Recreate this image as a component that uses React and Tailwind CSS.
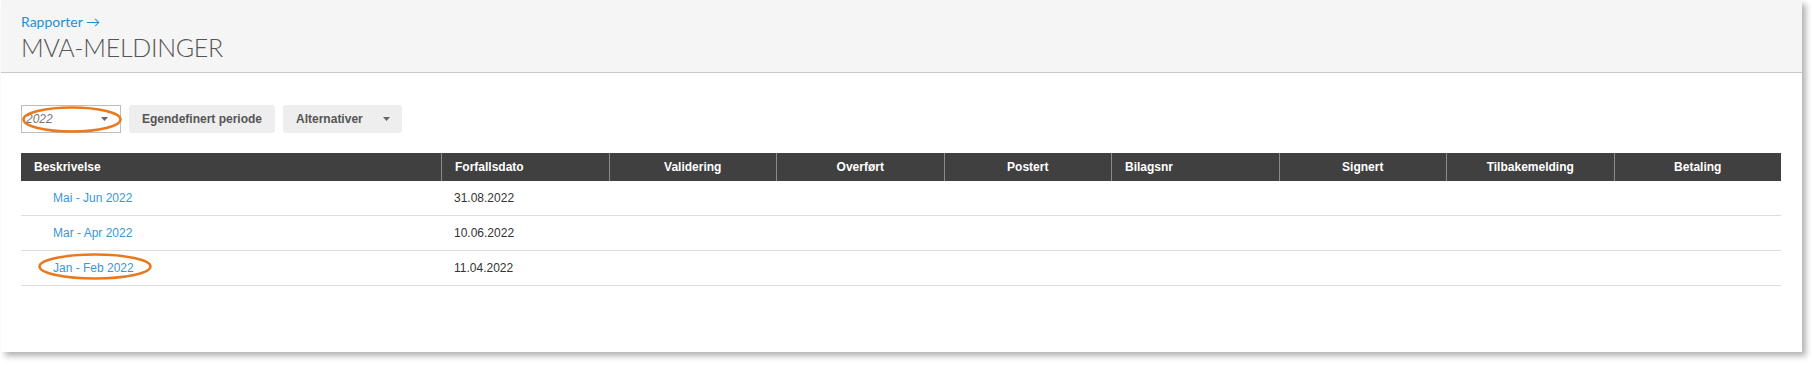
import React from "react";

const cols = [
  { label: "Beskrivelse", align: "left" },
  { label: "Forfallsdato", align: "left" },
  { label: "Validering", align: "center" },
  { label: "Overført", align: "center" },
  { label: "Postert", align: "center" },
  { label: "Bilagsnr", align: "left" },
  { label: "Signert", align: "center" },
  { label: "Tilbakemelding", align: "center" },
  { label: "Betaling", align: "center" },
];

const rows = [
  ["Mai - Jun 2022", "31.08.2022"],
  ["Mar - Apr 2022", "10.06.2022"],
  ["Jan - Feb 2022", "11.04.2022"],
];

function Caret() {
  return (
    <svg width="7" height="4" viewBox="0 0 7 4" className="block">
      <path d="M0 0 L7 0 L3.5 4 Z" fill="#666" />
    </svg>
  );
}

function Ellipse({ w, h, className }) {
  return (
    <svg
      width={w}
      height={h}
      viewBox={`0 0 ${w} ${h}`}
      className={className}
    >
      <ellipse
        cx={w / 2}
        cy={h / 2}
        rx={w / 2 - 1.5}
        ry={h / 2 - 1.5}
        fill="none"
        stroke="#e8791f"
        strokeWidth="2.5"
      />
    </svg>
  );
}

export default function App() {
  return (
    <div className="w-[1815px] h-[365px] bg-white font-['Liberation_Sans',Arial,sans-serif]">
      <div className="ml-px w-[1801px] h-[352px] bg-white shadow-[4px_4px_6px_rgba(0,0,0,0.3)] flex flex-col">
        <div className="h-[73px] bg-[#f5f5f5] border-b border-[#c8c8c8] px-[20px] pt-[12px] font-['Lato',sans-serif]">
          <div className="text-[14px] leading-[20px] text-[#1e90d0]">Rapporter →</div>
          <div className="text-[25px] leading-[30px] font-light text-[#555] tracking-[-0.3px]">
            MVA-MELDINGER
          </div>
        </div>

        <div className="px-[20px] pt-[32px]">
          <div className="flex gap-[8px] h-[28px]">
            <div className="relative w-[100px] h-[28px] border border-[#bdbdbd] bg-white flex items-center justify-between pl-[4px] pr-[12px]">
              <span className="text-[12px] italic text-[#777]">2022</span>
              <Caret />
              <Ellipse w={100} h={27} className="absolute left-0 top-0" />
            </div>
            <div className="h-[28px] px-[13px] rounded-[3px] bg-[#eeeeee] flex items-center text-[12px] font-bold text-[#555]">
              Egendefinert periode
            </div>
            <div className="h-[28px] w-[119px] pl-[13px] pr-[12px] rounded-[3px] bg-[#eeeeee] flex items-center justify-between text-[12px] font-bold text-[#555]">
              <span>Alternativer</span>
              <Caret />
            </div>
          </div>

          <div className="mt-[20px] w-[1760px]">
            <div className="grid grid-cols-[420px_repeat(8,1fr)] h-[28px] bg-[#404040]">
              {cols.map((c, i) => (
                <div
                  key={c.label}
                  className={
                    "h-[28px] flex items-center text-[12px] font-bold text-white px-[13px] " +
                    (i > 0 ? "border-l border-[#8a8a8a] " : "") +
                    (c.align === "center" ? "justify-center" : "justify-start")
                  }
                >
                  {c.label}
                </div>
              ))}
            </div>
            {rows.map((r, ri) => (
              <div
                key={r[0]}
                className="grid grid-cols-[420px_repeat(8,1fr)] h-[35px] border-b border-[#dddddd]"
              >
                <div className="relative flex items-center pl-[32px] text-[12px] text-[#3b96d6]">
                  {r[0]}
                  {ri === 2 && (
                    <Ellipse w={114} h={27} className="absolute left-[17px] top-[2px]" />
                  )}
                </div>
                <div className="flex items-center pl-[13px] text-[12px] text-[#333]">{r[1]}</div>
                {Array.from({ length: 7 }).map((_, k) => (
                  <div key={k} />
                ))}
              </div>
            ))}
          </div>
        </div>
      </div>
    </div>
  );
}
